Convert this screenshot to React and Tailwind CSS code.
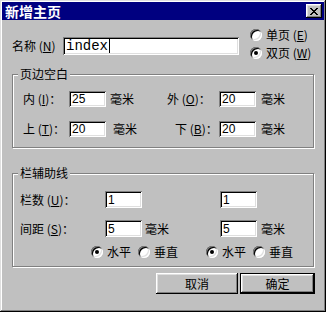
import React from "react";

const cjk = { fontFamily: '"Noto Sans CJK SC", "Noto Sans", sans-serif' };

function Field({ value, w = "w-[37px]", h = "h-[16px]", mono = false }) {
    return (
        <div
            className={`${w} ${h} bg-white shadow-[inset_1px_1px_#808080,inset_-1px_-1px_#fff,inset_2px_2px_#000,inset_-2px_-2px_#dfdfdf] pl-[3px] flex items-center text-black`}
            style={mono ? { fontFamily: '"Liberation Mono", monospace' } : { fontFamily: '"Liberation Sans", sans-serif' }}
        >
            <span className={mono ? "text-[14px] leading-none" : "text-[12px] leading-none"}>{value}</span>
            {mono && <span className="ml-[1px] w-[1px] h-[14px] bg-black" />}
        </div>
    );
}

function Radio({ checked, label }) {
    return (
        <div className="flex items-center">
            <div className="relative w-[12px] h-[12px] rounded-full bg-white shadow-[inset_1px_1px_#808080,inset_-1px_-1px_#fff,inset_2px_2px_#000,inset_-2px_-2px_#dfdfdf]">
                {checked && <div className="absolute left-[4px] top-[4px] w-[4px] h-[4px] rounded-full bg-black" />}
            </div>
            <span className="ml-[4px] text-[12px] leading-none">{label}</span>
        </div>
    );
}

function Group({ title, className, children }) {
    return (
        <div className={`relative ml-[10px] w-[302px] border border-[#808080] shadow-[inset_1px_1px_#fff,1px_1px_#fff] ${className}`}>
            <span className="absolute -top-[8px] left-[5px] bg-[#c0c0c0] px-[2px] text-[12px] leading-[14px]">{title}</span>
            {children}
        </div>
    );
}

const btn = "h-[21px] flex items-center justify-center text-[12px] bg-[#c0c0c0] shadow-[inset_-1px_-1px_#000,inset_1px_1px_#fff,inset_-2px_-2px_#808080,inset_2px_2px_#dfdfdf]";

export default function App() {
    return (
        <div
            className="w-[326px] h-[312px] bg-[#c0c0c0] p-[2px] text-black flex flex-col shadow-[inset_-1px_-1px_#000,inset_1px_1px_#dfdfdf,inset_-2px_-2px_#808080,inset_2px_2px_#fff]"
            style={cjk}
        >
            {/* title bar */}
            <div className="h-[18px] bg-[#000080] flex items-center justify-between pl-[3px] pr-[2px]">
                <span className="text-white font-bold text-[14px] leading-none">新增主页</span>
                <div className="w-[16px] h-[14px] flex items-center justify-center bg-[#c0c0c0] shadow-[inset_-1px_-1px_#000,inset_1px_1px_#fff,inset_-2px_-2px_#808080,inset_2px_2px_#dfdfdf]">
                    <svg width="8" height="7" viewBox="0 0 8 7">
                        <path d="M0 0h2v1h1v1h2V1h1V0h2v1H7v1H6v1H5v1h1v1h1v1h1v1H6V6H5V5H3v1H2v1H0V6h1V5h1V4h1V3H2V2H1V1H0z" fill="#000" />
                    </svg>
                </div>
            </div>

            {/* name row */}
            <div className="mt-[6px] h-[36px] flex">
                <div className="pl-[10px] pt-[4px] flex items-center">
                    <span className="w-[51px] text-[12px] leading-none">名称 (<span className="underline">N</span>)</span>
                    <Field value="index" w="w-[176px]" h="h-[18px]" mono />
                </div>
                <div className="ml-[11px] flex flex-col">
                    <div className="h-[18px] flex items-center">
                        <Radio label={<>单页 (<span className="underline">E</span>)</>} />
                    </div>
                    <div className="h-[18px] flex items-center">
                        <Radio checked label={<>双页 (<span className="underline">W</span>)</>} />
                    </div>
                </div>
            </div>

            {/* margins */}
            <Group title="页边空白" className="mt-[12px] h-[74px] pt-[16px] flex flex-col gap-[14px]">
                <div className="h-[16px] flex items-center text-[12px] leading-none">
                    <div className="w-[147px] pl-[10px] flex items-center">
                        <span className="w-[46px]">内 (<span className="underline">I</span>)：</span>
                        <Field value="25" />
                        <span className="ml-[4px]">毫米</span>
                    </div>
                    <div className="flex items-center">
                        <span className="w-[59px] pl-[7px]">外 (<span className="underline">O</span>)：</span>
                        <Field value="20" />
                        <span className="ml-[5px]">毫米</span>
                    </div>
                </div>
                <div className="h-[16px] flex items-center text-[12px] leading-none">
                    <div className="w-[147px] pl-[10px] flex items-center">
                        <span className="w-[46px]">上 (<span className="underline">T</span>)：</span>
                        <Field value="20" />
                        <span className="ml-[7px]">毫米</span>
                    </div>
                    <div className="flex items-center">
                        <span className="w-[59px] pl-[15px]">下 (<span className="underline">B</span>)：</span>
                        <Field value="20" />
                        <span className="ml-[5px]">毫米</span>
                    </div>
                </div>
            </Group>

            {/* column guides */}
            <Group title="栏辅助线" className="mt-[25px] h-[94px] pt-[17px] flex flex-col">
                <div className="h-[17px] pl-[7px] flex items-center text-[12px] leading-none">
                    <span className="w-[85px]">栏数 (<span className="underline">U</span>)：</span>
                    <div className="w-[115px]">
                        <Field value="1" h="h-[17px]" />
                    </div>
                    <Field value="1" h="h-[17px]" />
                </div>
                <div className="mt-[12px] h-[17px] pl-[7px] flex items-center text-[12px] leading-none">
                    <span className="w-[85px]">间距 (<span className="underline">S</span>)：</span>
                    <div className="w-[115px] flex items-center">
                        <Field value="5" h="h-[17px]" />
                        <span className="ml-[3px]">毫米</span>
                    </div>
                    <Field value="5" h="h-[17px]" />
                    <span className="ml-[4px]">毫米</span>
                </div>
                <div className="mt-[7px] h-[16px] pl-[78px] flex items-center">
                    <div className="w-[115px] flex items-center gap-[7px]">
                        <Radio checked label="水平" />
                        <Radio label="垂直" />
                    </div>
                    <div className="flex items-center gap-[7px]">
                        <Radio checked label="水平" />
                        <Radio label="垂直" />
                    </div>
                </div>
            </Group>

            {/* buttons */}
            <div className="mt-[6px] flex justify-end gap-[2px] pr-[9px]">
                <button className={`${btn} w-[82px]`}>取消</button>
                <div className="w-[75px] h-[21px] border border-black">
                    <button className={`${btn} w-full !h-[19px]`}>确定</button>
                </div>
            </div>
        </div>
    );
}
